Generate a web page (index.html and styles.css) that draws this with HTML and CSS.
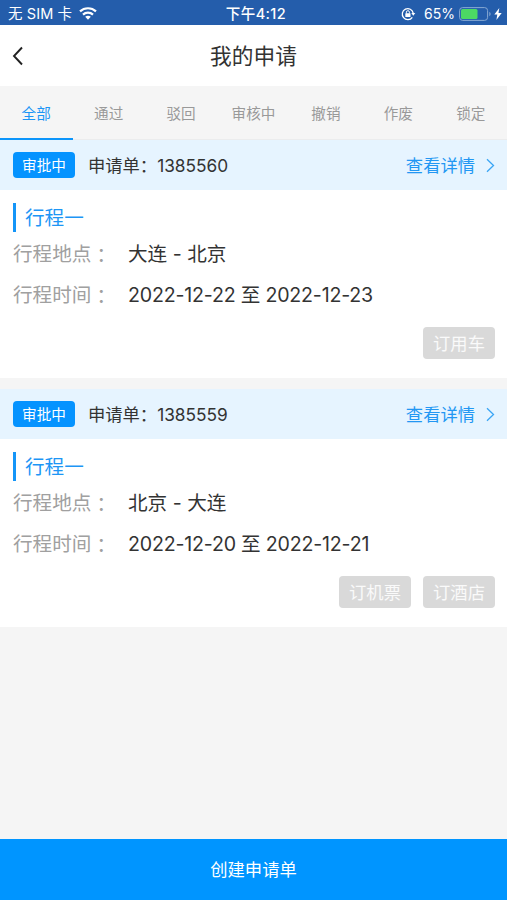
FILE: index.html
```html
<!DOCTYPE html>
<html lang="zh-CN">
<head>
<meta charset="utf-8">
<title>我的申请</title>
<link rel="stylesheet" href="styles.css">
</head>
<body>
<div class="status">
  <div class="carrier"><span>无 SIM 卡</span>
    <svg width="18" height="13" viewBox="0 0 18 13"><g fill="none" stroke="#fff" stroke-width="2.2"><path d="M1 4.4C5.5.2 12.500.2 17 4.400"/><path d="M4 7.600c2.800-2.600 7.200-2.600 10 0"/></g><path d="M6.200 9.800c1.600-1.500 4-1.500 5.600 0L9 12.700z" fill="#fff"/></svg>
  </div>
  <div class="clock">下午4:12</div>
  <div class="power">
    <svg class="lock" width="15" height="14" viewBox="0 0 15 14"><path d="M11.300 10.300A5.500 5.500 0 1 1 12.200 6.200" fill="none" stroke="#fff" stroke-width="1.300"/><path d="M10.300 6h4l-2 2.700z" fill="#fff"/><rect x="4.300" y="6.300" width="5.200" height="3.800" rx=".5" fill="#fff"/><path d="M5.400 6.500V5.200a1.500 1.500 0 0 1 3 0v1.300" fill="none" stroke="#fff"/></svg>
    <span>65%</span>
    <svg class="battery" width="33" height="14" viewBox="0 0 33 14"><rect x=".6" y=".6" width="28" height="12.800" rx="3" fill="none" stroke="#87a8d3"/><rect x="2" y="2" width="16.500" height="10" rx="1.500" fill="#4cd964"/><path d="M30.300 4.800c1.800.8 1.800 3.600 0 4.400z" fill="#87a8d3"/></svg>
    <svg width="8" height="12" viewBox="0 0 8 12"><path d="M5.300 0 .3 6.600h3L2.400 12l5.300-7.100H4.500z" fill="#fff"/></svg>
  </div>
</div>
<header class="nav">
  <svg class="back" width="12" height="20" viewBox="0 0 12 20"><path d="M10 1.500 2 10l8 8.500" fill="none" stroke="#222" stroke-width="1.900"/></svg>
  <h1>我的申请</h1>
</header>
<nav class="tabs">
  <span class="tab active">全部</span><span class="tab">通过</span><span class="tab">驳回</span><span class="tab">审核中</span><span class="tab">撤销</span><span class="tab">作废</span><span class="tab">锁定</span>
</nav>
<main>
  <section class="card">
    <div class="card-head">
      <span class="badge">审批中</span>
      <span class="order">申请单：<span class="num">1385560</span></span>
      <span class="detail">查看详情</span>
      <svg width="9" height="15" viewBox="0 0 9 15"><path d="m1 1.200 6.500 6.300L1 13.800" fill="none" stroke="#3aa5f5" stroke-width="1.300"/></svg>
    </div>
    <div class="card-body">
      <h2>行程一</h2>
      <div class="row"><span class="label">行程地点<span class="colon" lang="zh-TW">：</span></span><span>大连 - 北京</span></div>
      <div class="row"><span class="label">行程时间<span class="colon" lang="zh-TW">：</span></span><span class="date">2022-12-22 至 2022-12-23</span></div>
      <div class="actions"><span class="btn">订用车</span></div>
    </div>
  </section>
  <section class="card">
    <div class="card-head">
      <span class="badge">审批中</span>
      <span class="order">申请单：<span class="num">1385559</span></span>
      <span class="detail">查看详情</span>
      <svg width="9" height="15" viewBox="0 0 9 15"><path d="m1 1.200 6.500 6.300L1 13.800" fill="none" stroke="#3aa5f5" stroke-width="1.300"/></svg>
    </div>
    <div class="card-body">
      <h2>行程一</h2>
      <div class="row"><span class="label">行程地点<span class="colon" lang="zh-TW">：</span></span><span>北京 - 大连</span></div>
      <div class="row"><span class="label">行程时间<span class="colon" lang="zh-TW">：</span></span><span class="date">2022-12-20 至 2022-12-21</span></div>
      <div class="actions"><span class="btn">订机票</span><span class="btn">订酒店</span></div>
    </div>
  </section>
</main>
<footer class="create">创建申请单</footer>
</body>
</html>
```
FILE: styles.css
```css
* { box-sizing: border-box; }
body {
  margin: 0;
  height: 900px;
  display: flex;
  flex-direction: column;
  overflow: hidden;
  background: #f5f5f5;
  color: #333;
  font-family: Inter, "Noto Sans CJK SC", sans-serif;
  white-space: nowrap;
}
svg { display: block; flex: none; }
.status {
  height: 25px;
  flex: none;
  display: grid;
  grid-template-columns: 1fr auto 1fr;
  align-items: center;
  padding: 2px 5px 0 8px;
  background: #245dab;
  color: #fff;
  font-size: 14px;
  line-height: 22px;
}
.carrier, .power { display: flex; align-items: center; }
.carrier { gap: 7px; font-size: 14.500px; }
.carrier span { letter-spacing: 0.100px; }
.clock { padding-left: 2px; font-size: 14.500px; font-weight: 500; letter-spacing: 0.400px; }
.power { justify-content: flex-end; }
.lock { margin-right: 8px; }
.battery { margin: 0 2px 0 4px; }
.nav {
  height: 61px;
  flex: none;
  display: grid;
  grid-template-columns: 1fr auto 1fr;
  align-items: center;
  background: #fff;
}
.back { margin-left: 12px; }
h1 { margin: 0; font-size: 21.700px; font-weight: 400; line-height: 32px; }
.tabs {
  height: 54px;
  flex: none;
  display: grid;
  grid-template-columns: repeat(7, 1fr);
  box-shadow: inset 0 -1px #ebeced;
  color: #999;
  font-size: 14.600px;
  line-height: 56px;
  text-align: center;
}
.tab { height: 54px; }
.tab.active { position: relative; color: #1c95f5; }
.tab.active::after {
  content: "";
  position: absolute;
  z-index: 1;
  left: 0;
  right: -0.600px;
  bottom: 0;
  height: 2px;
  background: #0c95fa;
}
main { flex: 1; display: flex; flex-direction: column; gap: 11px; }
.card { height: 238px; background: #fff; }
.card-head {
  height: 50px;
  display: flex;
  align-items: center;
  padding: 0 12px 0 13px;
  background: #e6f4ff;
  font-size: 17.300px;
}
.badge {
  width: 62px;
  height: 26px;
  margin-right: 13px;
  border-radius: 4px;
  background: #0593ff;
  color: #fff;
  font-size: 14.600px;
  line-height: 28px;
  text-align: center;
}
.order, .detail { padding-bottom: 2px; }
.detail { margin: 0 11px 0 auto; color: #2297f3; }
.card-body { padding: 13px 12px 0 13px; font-size: 19.600px; }
h2 {
  margin: 0;
  height: 29px;
  border-left: 3px solid #1495f8;
  padding-left: 9px;
  color: #1d96f5;
  font-size: 19.600px;
  font-weight: 400;
  line-height: 31px;
}
.row { display: flex; height: 41px; line-height: 45px; }
.label { width: 115px; color: #a0a0a0; }
.colon {
  font-family: "Noto Sans CJK TC", sans-serif;
  vertical-align: -2px;
  line-height: 1;
}
.date { letter-spacing: -0.200px; }
.actions { display: flex; justify-content: flex-end; gap: 12px; padding-top: 13px; }
.btn {
  width: 72px;
  height: 32px;
  border-radius: 4px;
  background: #d9d9d9;
  color: #fafafa;
  font-size: 17.300px;
  line-height: 34px;
  text-align: center;
}
.create {
  height: 61px;
  flex: none;
  background: #0095ff;
  color: #fff;
  font-size: 17.300px;
  line-height: 62px;
  text-align: center;
}
```
